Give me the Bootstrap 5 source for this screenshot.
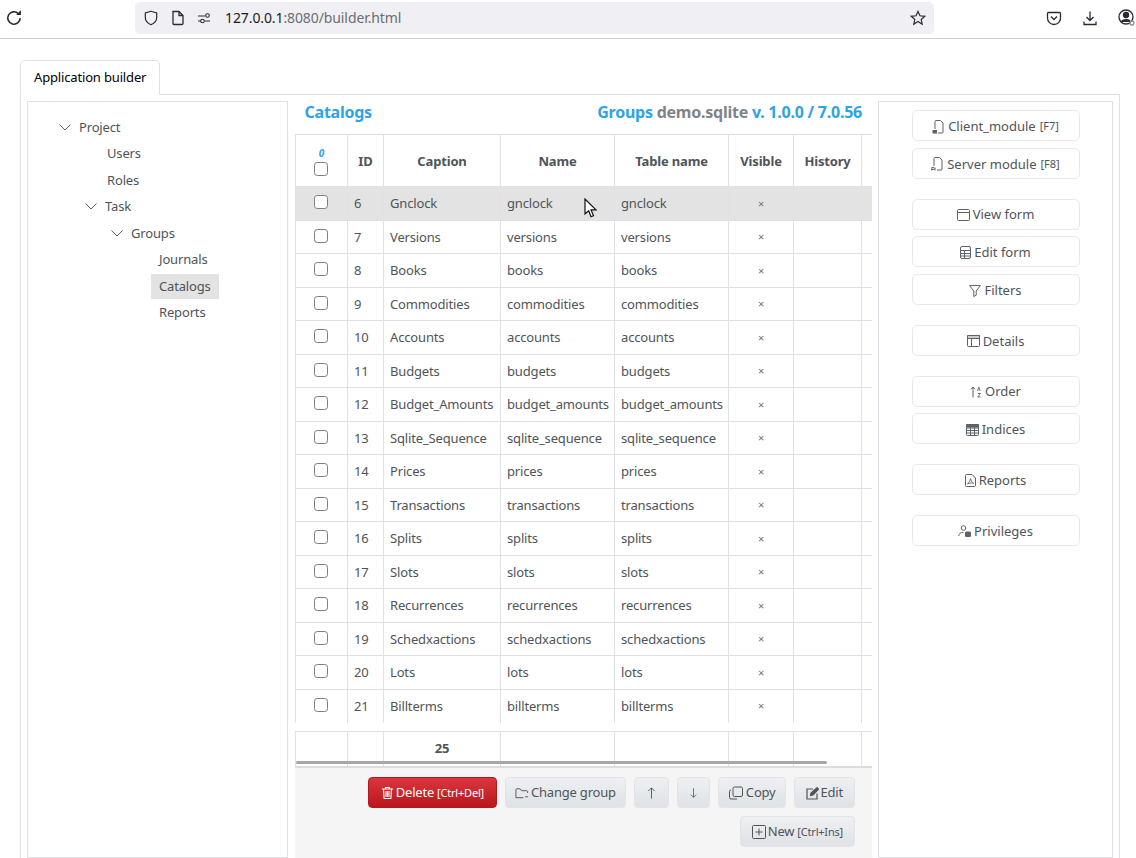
<!DOCTYPE html>
<html lang="en">
<head>
  <meta charset="UTF-8" />
  <title>Application builder</title>
  <meta name="viewport" content="width=device-width, initial-scale=1.0" />
  <link href="https://cdn.jsdelivr.net/npm/bootstrap@5.3.0/dist/css/bootstrap.min.css" rel="stylesheet">
  <style>
    html, body { height: 858px; overflow: hidden; }
    body { position: relative; background: #fff; color: #4f5459; font-family: "Noto Sans", "Open Sans", sans-serif; font-size: 13px; letter-spacing: -.16px; }
    svg { flex: none; }

    .browser-bar { height: 39px; border-bottom: 1px solid #cfcfd1; color: #2b2a33; letter-spacing: -.1px; }
    .reload-slot { width: 135px; padding-left: 5px; }
    .reload-slot svg { display: block; margin-top: -3px; }
    .url-box { width: 799px; height: 32px; margin-top: -3px; background: #f0f0f4; border-radius: 5px; padding: 0 8px; font-size: 14px; }
    .url-icons { width: 82px; padding-left: 0; gap: 12px; }
    .url-host { color: #1c1b22; }
    .url-rest { color: #6c6c72; }
    .tool-icons { gap: 20px; margin-left: 112px; margin-top: -2px; }

    .page-wrap { padding: 21px 16px 0 20px; }
    .tabs-top { border-bottom: 1px solid #dee2e6; --bs-nav-tabs-border-color: #dee2e6; }
    .tabs-top .nav-link { height: 35px; padding: 0 13px; line-height: 32px; color: #4f5459; font-size: 13px; border-radius: 5px 5px 0 0; }
    .tab-body { border: 1px solid #dee2e6; border-top: 0; padding: 6px 6px 0; gap: 0; height: 770px; }

    .tree-panel { width: 261px; height: 757px; border: 1px solid #dee2e6; padding-top: 11.5px; margin-right: 7px; }
    .tree-list { list-style: none; padding: 0 0 0 26px; margin: 0; }
    .tree-list.tree-root { padding-left: 45px; }
    .tree-row { height: 26.5px; line-height: 26.5px; }
    .tree-branch { margin-left: -14px; }
    .tree-branch svg { margin-right: 8px; }
    .tree-leaf { display: inline-block; height: 25px; line-height: 25px; padding: 0 8px; }
    .tree-on { background: #e3e3e3; }

    .center-col { width: 577px; margin-right: 6px; }
    .title-row { height: 33px; padding: 0 10px 0 9.5px; font-size: 16px; font-weight: 700; color: #2ea3e6; line-height: 22px; letter-spacing: -.24px; }
    .title-gray { color: #808488; }

    .grid-wrap { position: relative; height: 632px; overflow: hidden; }
    .data-table { table-layout: fixed; width: 620px; border-collapse: collapse; margin: 0; color: #4f5459; }
    .data-table th, .data-table td { padding: 0 6px; border: 0 solid #dee2e6; border-right-width: 1px; vertical-align: middle; white-space: nowrap; overflow: hidden; }
    .data-table th:first-child, .data-table td:first-child { border-left-width: 1px; }
    .data-table thead th { height: 52px; padding-top: 2px; text-align: center; font-weight: 700; border-top-width: 1px; border-bottom-width: 1px; }
    .data-table tbody td { height: 33.5px; padding-top: 1px; border-bottom-width: 1px; }
    .data-table tbody tr:last-child td { border-bottom-width: 0; }
    .data-table tbody tr.row-sel td { background: #e3e3e3; }
    .data-table .spacer-row td { height: 9px; padding: 0; border-width: 0; }
    .data-table .foot-row td { height: 35px; padding-bottom: 2px; border-top-width: 1px; text-align: center; font-weight: 700; }
    .check-box { display: block; width: 14px; height: 14px; margin: -3px 0 0 12px; border-color: #7a7f85; }
    thead .check-box { margin-top: 0; }
    .head-count { font-size: 10px; font-style: italic; font-weight: 700; color: #2ea3e6; line-height: 13px; margin-bottom: 2px; }
    .mark-cell { text-align: center; font-size: 11px; color: #6b7075; }
    .grid-scroll { position: absolute; left: 1px; top: 627px; width: 531px; height: 3px; background: #a8a8a8; border-radius: 2px; }

    .action-bar { height: 92px; background: #f5f5f5; border-top: 2px solid #dcdcdc; padding: 9px 17px 0 0; gap: 8px; }
    .act-btn { height: 31px; padding: 1px 9px 0; border: 1px solid #e2e4e7; border-radius: 4px; font-size: 13px; color: #4f5459; background: linear-gradient(#eef0f2, #dfe2e6); display: inline-flex; align-items: center; gap: 2px; letter-spacing: -.2px; }
    .act-danger { padding: 1px 12px 0; color: #fff; border-color: #b8161c; background: linear-gradient(#d9363f, #ba171c); }
    .act-arrow { padding: 1px 10px 0; }
    .act-wide { padding: 1px 11px 0; }
    .key-hint { font-size: 11px; margin-left: 1px; }

    .side-panel { width: 235px; height: 757px; border: 1px solid #dee2e6; padding-top: 8px; }
    .side-btn { width: 168px; height: 31px; flex: none; padding: 2px 0 0; border: 1px solid #e6e8eb; border-radius: 5px; background: #fff; color: #4f5459; font-size: 13px; display: flex; align-items: center; justify-content: center; gap: 3px; margin-bottom: 6.75px; }
    .side-gap { margin-top: 13px; }

    .mouse-arrow { position: absolute; left: 584px; top: 198px; }
  </style>
</head>
<body>

<div class="browser-bar d-flex align-items-center">
  <div class="reload-slot">
    <svg width="18" height="18" viewBox="0 0 16 16" fill="none" stroke="#2b2a33" stroke-width="1.4"><path d="M13.5 8a5.5 5.5 0 1 1-1.7-4"/><path d="M13.6 1.600v3.200h-3.200" fill="#2b2a33" stroke-width="1"/></svg>
  </div>
  <div class="url-box d-flex align-items-center">
    <div class="url-icons d-flex align-items-center">
      <svg width="16" height="16" viewBox="0 0 16 16" fill="none" stroke="#2b2a33" stroke-width="1.2"><path d="M8 1.300 2.300 3v4.500c0 3.400 2.600 5.900 5.700 7.200 3.100-1.300 5.700-3.800 5.700-7.200V3z"/></svg>
      <svg width="14" height="16" viewBox="0 0 14 16" fill="none" stroke="#2b2a33" stroke-width="1.3"><path d="M2 1.500h6l4 4v8a1 1 0 0 1-1 1H3a1 1 0 0 1-1-1z"/><path d="M8 1.500v4h4"/></svg>
      <svg width="14" height="14" viewBox="0 0 14 14" fill="none" stroke="#2b2a33" stroke-width="1.1"><path d="M1 5h7M1 10h3M8 10h5"/><circle cx="10.500" cy="4.500" r="1.800"/><circle cx="5.500" cy="10" r="1.800"/></svg>
    </div>
    <div class="flex-grow-1"><span class="url-host">127.0.0.1</span><span class="url-rest">:8080/builder.html</span></div>
    <svg width="16" height="16" viewBox="0 0 16 16" fill="none" stroke="#2b2a33" stroke-width="1.2"><path d="m8 1.400 2 4.400 4.800.5-3.600 3.200 1 4.700L8 11.400l-4.200 2.800 1-4.700L1.200 6.300l4.800-.5z"/></svg>
  </div>
  <div class="tool-icons d-flex align-items-center">
    <svg width="16" height="16" viewBox="0 0 16 16" fill="none" stroke="#2b2a33" stroke-width="1.3"><path d="M2.500 2.500h11a1 1 0 0 1 1 1V8a6.500 6.500 0 0 1-13 0V3.500a1 1 0 0 1 1-1z"/><path d="m5 6.500 3 3 3-3"/></svg>
    <svg width="16" height="16" viewBox="0 0 16 16" fill="none" stroke="#2b2a33" stroke-width="1.3"><path d="M8 1.500v9M4.500 7 8 10.500 11.500 7M2 11.500v3h12v-3"/></svg>
    <svg width="18" height="18" viewBox="0 0 18 18" fill="none" stroke="#2b2a33" stroke-width="1.3"><circle cx="8" cy="8" r="7"/><circle cx="8" cy="6" r="2.500" fill="#2b2a33"/><path d="M3.500 13c1-3 8-3 9 0" fill="#2b2a33"/><circle cx="14" cy="14" r="2" fill="#fff" stroke="#8f8f8f"/></svg>
  </div>
</div>

<div class="page-wrap">
  <ul class="nav nav-tabs tabs-top">
    <li class="nav-item"><a class="nav-link active" href="#">Application builder</a></li>
  </ul>
  <div class="tab-body d-flex align-items-start">

    <div class="tree-panel">
      <ul class="tree-list tree-root">
        <li>
          <div class="tree-row tree-branch d-flex align-items-center"><svg width="12" height="12" viewBox="0 0 12 12" fill="none" stroke="#5d6268"><path d="m.5 3.500 5.500 5.500 5.500-5.500"/></svg>Project</div>
          <ul class="tree-list">
            <li class="tree-row"><span class="tree-leaf">Users</span></li>
            <li class="tree-row"><span class="tree-leaf">Roles</span></li>
            <li>
              <div class="tree-row tree-branch d-flex align-items-center"><svg width="12" height="12" viewBox="0 0 12 12" fill="none" stroke="#5d6268"><path d="m.5 3.500 5.500 5.500 5.500-5.500"/></svg>Task</div>
              <ul class="tree-list">
                <li>
                  <div class="tree-row tree-branch d-flex align-items-center"><svg width="12" height="12" viewBox="0 0 12 12" fill="none" stroke="#5d6268"><path d="m.5 3.500 5.500 5.500 5.500-5.500"/></svg>Groups</div>
                  <ul class="tree-list">
                    <li class="tree-row"><span class="tree-leaf">Journals</span></li>
                    <li class="tree-row"><span class="tree-leaf tree-on">Catalogs</span></li>
                    <li class="tree-row"><span class="tree-leaf">Reports</span></li>
                  </ul>
                </li>
              </ul>
            </li>
          </ul>
        </li>
      </ul>
    </div>

    <div class="center-col">
      <div class="title-row d-flex justify-content-between">
        <span>Catalogs</span>
        <span>Groups <span class="title-gray">demo.sqlite</span> v. 1.0.0 / 7.0.56</span>
      </div>
      <div class="grid-wrap">
        <table class="data-table">
          <colgroup>
            <col style="width:52px"><col style="width:36px"><col style="width:117px"><col style="width:114px"><col style="width:114px"><col style="width:65px"><col style="width:68px"><col style="width:54px">
          </colgroup>
          <thead>
            <tr>
              <th><div class="head-count">0</div><input class="form-check-input check-box" type="checkbox"></th>
              <th>ID</th><th>Caption</th><th>Name</th><th>Table name</th><th>Visible</th><th>History</th><th></th>
            </tr>
          </thead>
          <tbody id="catalogRows"></tbody>
          <tfoot>
            <tr class="spacer-row"><td colspan="8"></td></tr>
            <tr class="foot-row"><td></td><td></td><td>25</td><td></td><td></td><td></td><td></td><td></td></tr>
          </tfoot>
        </table>
        <div class="grid-scroll"></div>
      </div>
      <div class="action-bar d-flex flex-wrap justify-content-end align-content-start">
        <button class="act-btn act-danger" type="button">
          <svg width="13" height="14" viewBox="0 0 13 14" fill="none" stroke="#fff" stroke-width="1.100"><path d="M1 3h11M4.500 3V1.500h4V3M2.500 3l.6 9.500h6.800l.6-9.500M5 5v6M6.500 5v6M8 5v6"/></svg>
          Delete <span class="key-hint">[Ctrl+Del]</span>
        </button>
        <button class="act-btn" type="button">
          <svg width="14" height="13" viewBox="0 0 15 13" fill="none" stroke="#4f5459"><path d="M1 11V2.500a1 1 0 0 1 1-1h3.500l1.500 2h5.500a1 1 0 0 1 1 1V6M1 11h8M11 10h3"/></svg>
          Change group
        </button>
        <button class="act-btn act-arrow" type="button" aria-label="Up"><svg width="13" height="14" viewBox="0 0 14 14" fill="none" stroke="#4f5459"><path d="M7 13V1.500M3.500 5 7 1.500 10.500 5"/></svg></button>
        <button class="act-btn act-arrow" type="button" aria-label="Down"><svg width="11" height="14" viewBox="0 0 14 14" fill="none" stroke="#4f5459"><path d="M7 1v11.500M3.500 9 7 12.500 10.500 9"/></svg></button>
        <button class="act-btn" type="button">
          <svg width="16" height="14" viewBox="0 0 15 14" fill="none" stroke="#4f5459"><rect x="4.500" y="1" width="9.500" height="9.500" rx="1.500"/><path d="M2.500 4A1.500 1.500 0 0 0 1 5.500v6A1.500 1.500 0 0 0 2.500 13h6"/></svg>
          Copy
        </button>
        <button class="act-btn act-wide" type="button">
          <svg width="13" height="13" viewBox="0 0 13 13" fill="none" stroke="#4f5459" stroke-width="1.200"><path d="M11 6.500V12H1V2h6"/><path d="M4.500 8.500 5 6l6-5.300 1.500 1.500L7 8z" fill="#4f5459"/></svg>
          Edit
        </button>
        <button class="act-btn act-wide" type="button">
          <svg width="14" height="14" viewBox="0 0 14 14" fill="none" stroke="#4f5459"><rect x=".5" y=".5" width="13" height="13" rx="1"/><path d="M7 3.500v7M3.500 7h7"/></svg>
          New <span class="key-hint">[Ctrl+Ins]</span>
        </button>
      </div>
    </div>

    <div class="side-panel d-flex flex-column align-items-center">
      <button class="side-btn" type="button">
        <svg width="13" height="14" viewBox="0 0 13 14" fill="none" stroke="#5d6268"><path d="M3 9V1.500a1 1 0 0 1 1-1h4.500L11 3v9a1 1 0 0 1-1 1H6"/><rect x="1" y="10.500" width="3.500" height="2.500" fill="#5d6268"/></svg>
        Client_module <span class="key-hint">[F7]</span>
      </button>
      <button class="side-btn" type="button">
        <svg width="13" height="14" viewBox="0 0 13 14" fill="none" stroke="#5d6268"><path d="M3 9V1.500a1 1 0 0 1 1-1h4.500L11 3v9a1 1 0 0 1-1 1H6"/><path d="M.8 13.500v-3h2l.5 1-.5 1h-2M4 13.500v-3"/></svg>
        Server module <span class="key-hint">[F8]</span>
      </button>
      <button class="side-btn side-gap" type="button">
        <svg width="13" height="12" viewBox="0 0 13 12" fill="none" stroke="#5d6268"><rect x=".5" y=".5" width="12" height="11" rx="1"/><path d="M.5 3.500h12"/></svg>
        View form
      </button>
      <button class="side-btn" type="button">
        <svg width="11" height="13" viewBox="0 0 11 13" fill="none" stroke="#5d6268"><rect x=".5" y=".5" width="10" height="12" rx="1.500"/><path d="M.5 4.500h10M.5 7.500h10M.5 10h10M4.500 4.500v8"/></svg>
        Edit form
      </button>
      <button class="side-btn" type="button">
        <svg width="12" height="12" viewBox="0 0 12 12" fill="none" stroke="#5d6268"><path d="M.6.600h10.800L7.200 6v4.200L4.800 11.500V6z"/></svg>
        Filters
      </button>
      <button class="side-btn side-gap" type="button">
        <svg width="13" height="12" viewBox="0 0 13 12" fill="none" stroke="#5d6268"><path d="M.5.500h12v3H.5z" fill="#c9ccd0"/><rect x=".5" y=".5" width="12" height="11" rx="1"/><path d="M.5 3.500h12M4.500 3.500v8"/></svg>
        Details
      </button>
      <button class="side-btn side-gap" type="button">
        <svg width="12" height="12" viewBox="0 0 12 12" fill="none" stroke="#5d6268"><path d="M3 11.500V1M1 3.200 3 1l2 2.200"/><path d="M7.500 5l1.300-4 1.300 4M7.800 7.500h2.600L7.800 11h2.600" stroke-width=".9"/></svg>
        Order
      </button>
      <button class="side-btn" type="button">
        <svg width="13" height="12" viewBox="0 0 13 12" fill="none" stroke="#5d6268"><path d="M.5.500h12V3H.5z" fill="#5d6268"/><rect x=".5" y=".5" width="12" height="11" rx="1"/><path d="M.5 4h12M.5 6.500h12M.5 9h12M4.500 1.500v10M8.500 1.500v10"/></svg>
        Indices
      </button>
      <button class="side-btn side-gap" type="button">
        <svg width="11" height="13" viewBox="0 0 11 13" fill="none" stroke="#5d6268"><path d="M1.500.500h5.500L10.500 4v7.500a1 1 0 0 1-1 1h-8a1 1 0 0 1-1-1v-10a1 1 0 0 1 1-1z"/><path d="M5.500 4.500c-.5 2.500-1.500 4-3 5.500 2-1 4-1.200 6-.8-1.500-1-2.500-2.500-3-4.700z" stroke-width=".9"/></svg>
        Reports
      </button>
      <button class="side-btn side-gap" type="button">
        <svg width="13" height="12" viewBox="0 0 13 12" fill="none" stroke="#5d6268"><circle cx="5.500" cy="3" r="2.300"/><path d="M.8 11c0-2.500 2-3.700 4.700-3.700"/><rect x="7.500" y="7" width="5" height="4.500" rx=".5" fill="#5d6268"/></svg>
        Privileges
      </button>
    </div>

  </div>
</div>

<svg class="mouse-arrow" width="14" height="21" viewBox="0 0 14 21"><path d="M1 1v15l3.700-3.300 2.300 6 2.500-1-2.400-5.800H12z" fill="#fff" stroke="#111" stroke-width="1.200"/></svg>

<script>
  const catalogs = [
    [6, 'Gnclock', 'gnclock'], [7, 'Versions', 'versions'], [8, 'Books', 'books'],
    [9, 'Commodities', 'commodities'], [10, 'Accounts', 'accounts'], [11, 'Budgets', 'budgets'],
    [12, 'Budget_Amounts', 'budget_amounts'], [13, 'Sqlite_Sequence', 'sqlite_sequence'], [14, 'Prices', 'prices'],
    [15, 'Transactions', 'transactions'], [16, 'Splits', 'splits'], [17, 'Slots', 'slots'],
    [18, 'Recurrences', 'recurrences'], [19, 'Schedxactions', 'schedxactions'], [20, 'Lots', 'lots'],
    [21, 'Billterms', 'billterms']
  ];
  const rows = document.getElementById('catalogRows');
  catalogs.forEach((item, i) => {
    rows.innerHTML += `
      <tr class="${i === 0 ? 'row-sel' : ''}">
        <td><input class="form-check-input check-box" type="checkbox"></td>
        <td>${item[0]}</td><td>${item[1]}</td><td>${item[2]}</td><td>${item[2]}</td>
        <td class="mark-cell">×</td><td></td><td></td>
      </tr>`;
  });
</script>
</body>
</html>
